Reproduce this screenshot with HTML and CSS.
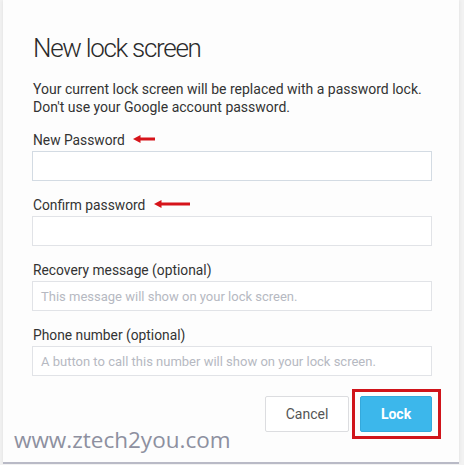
FILE: index.html
```html
<!DOCTYPE html>
<html>
<head>
<meta charset="utf-8">
<link rel="stylesheet" href="styles.css">
</head>
<body>
<div class="dialog">
  <h1 class="title">New lock screen</h1>
  <p class="intro">Your current lock screen will be replaced with a password lock.<br>Don't use your Google account password.</p>

  <div class="field">
    <label class="label">New Password<svg class="arrow a1" width="22" height="8" viewBox="0 0 22 8"><path d="M0 4 L7.5 0 L7.5 2.5 L22 2.5 L22 5.5 L7.5 5.5 L7.5 8 Z" fill="#d6141a"/></svg></label>
    <div class="input focus"></div>
  </div>

  <div class="field">
    <label class="label">Confirm password<svg class="arrow a2" width="36" height="8" viewBox="0 0 36 8"><path d="M0 4 L7.5 0 L7.5 2.5 L36 2.5 L36 5.5 L7.5 5.5 L7.5 8 Z" fill="#d6141a"/></svg></label>
    <div class="input"></div>
  </div>

  <div class="field">
    <label class="label">Recovery message (optional)</label>
    <div class="input"><span class="ph">This message will show on your lock screen.</span></div>
  </div>

  <div class="field">
    <label class="label">Phone number (optional)</label>
    <div class="input"><span class="ph">A button to call this number will show on your lock screen.</span></div>
  </div>

  <div class="actions">
    <button class="btn cancel">Cancel</button>
    <button class="btn lock">Lock</button>
  </div>

  <div class="watermark">www.ztech2you.com</div>
</div>
</body>
</html>
```

FILE: styles.css
```css
html, body {
  margin: 0;
  padding: 0;
  background: #f2f2f2;
}

.dialog {
  position: relative;
  box-sizing: border-box;
  width: 456px;
  height: 464px;
  margin-left: 3px;
  background: #fdfdfd;
  border-bottom: 2px solid #b9bac6;
  padding: 33px 32px 0 29px;
  font-family: Roboto, "Liberation Sans", sans-serif;
  color: #333;
  box-shadow: 0 0 4px rgba(0,0,0,0.08);
}

.title {
  margin: 0 0 0 1px;
  font-size: 26px;
  font-weight: 300;
  line-height: 30px;
  letter-spacing: -1.3px;
  color: #2a2a2a;
}

.intro {
  margin: 17px 0 0 1px;
  font-size: 14px;
  line-height: 18px;
  color: #333;
}

.field {
  margin-top: 15px;
  display: flex;
  flex-direction: column;
  gap: 2px;
}

.label {
  display: flex;
  align-items: center;
  margin-left: 1px;
  font-size: 13.8px;
  line-height: 18px;
  color: #333;
}

.arrow {
  margin-left: 8px;
  position: relative;
  top: -1px;
}

.a2 {
  margin-left: 9px;
}

.input {
  box-sizing: border-box;
  height: 30px;
  width: 400px;
  border: 1px solid #e1e3e7;
  background: #fff;
  display: flex;
  align-items: center;
  padding-left: 8px;
}

.input.focus {
  border-color: #d3dbe3;
}

.ph {
  font-size: 13px;
  color: #b6b9c2;
}

.actions {
  display: flex;
  justify-content: flex-end;
  gap: 11px;
  margin-top: 20px;
  width: 400px;
}

.btn {
  box-sizing: border-box;
  height: 36px;
  font-family: Roboto, "Liberation Sans", sans-serif;
  font-size: 14px;
  border-radius: 2px;
  padding: 0;
}

.cancel {
  width: 84px;
  background: #fff;
  border: 1px solid #dcdde0;
  color: #555;
}

.lock {
  position: relative;
  width: 72px;
  background: #3cb7eb;
  border: 1px solid #34a9dc;
  color: #fff;
  font-weight: 700;
}

.lock::after {
  content: "";
  position: absolute;
  left: -9px;
  top: -8px;
  right: -10px;
  bottom: -8px;
  border: 3px solid #d0141b;
}

.watermark {
  position: absolute;
  left: 11px;
  top: 424px;
  font-family: "Open Sans", "DejaVu Sans", sans-serif;
  font-size: 22.5px;
  color: #8d90a0;
}
```
